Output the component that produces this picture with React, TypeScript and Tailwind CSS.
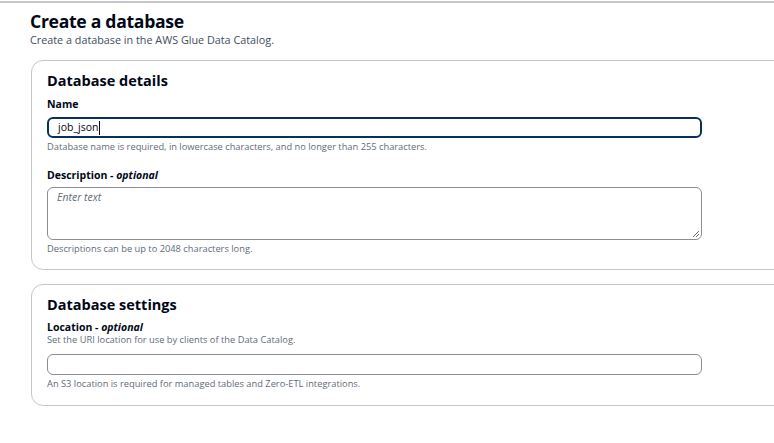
import React from "react";

const font = { fontFamily: '"Open Sans", "Noto Sans", Arial, sans-serif' };

export default function App() {
  return (
    <div className="w-[774px] h-[443px] overflow-hidden bg-white text-[#000716]" style={font}>
      <div className="mt-px h-[2px] w-full bg-[#c6c6cd]" />
      <div className="pl-[30px]">
        <h1 className="mt-[6px] text-[17.6px] leading-[24px] font-bold tracking-[-0.3px]">Create a database</h1>
        <p className="text-[10.8px] leading-[14px] text-[#414d5c]">Create a database in the AWS Glue Data Catalog.</p>

        <div className="mt-[13px] ml-px w-[780px] rounded-[12px] border border-[#c6c6cd] pl-[15px] pt-[9px] pb-[14px]">
          <h2 className="text-[14.5px] leading-[22px] font-bold">Database details</h2>
          <div className="mt-[5px] text-[10.5px] leading-[14px] font-bold">Name</div>
          <div className="mt-[6px] flex h-[21px] w-[655px] items-center rounded-[6px] border-2 border-[#0a2f5f] pl-[9px] text-[10.5px]">
            <span>job_json</span>
            <span className="ml-px inline-block h-[14px] w-px bg-[#000716]" />
          </div>
          <p className="mt-[3px] text-[9.3px] leading-[12px] text-[#5f6b7a]">Database name is required, in lowercase characters, and no longer than 255 characters.</p>
          <div className="mt-[15px] text-[10.5px] leading-[14px] font-bold">
            Description - <i>optional</i>
          </div>
          <div className="relative mt-[5px] h-[53px] w-[655px] rounded-[6px] border border-[#8c8c94] px-[9px] pt-[2px] text-[10.5px] italic text-[#5f6b7a]">
            Enter text
            <svg className="absolute right-[1px] bottom-[1px]" width="9" height="9" viewBox="0 0 9 9">
              <path d="M8 2 L2 8 M8 5 L5 8" stroke="#6b6b6b" strokeWidth="1" />
            </svg>
          </div>
          <p className="mt-[3px] text-[9.3px] leading-[12px] text-[#5f6b7a]">Descriptions can be up to 2048 characters long.</p>
        </div>

        <div className="mt-[14px] ml-px w-[780px] rounded-[12px] border border-[#c6c6cd] pl-[15px] pt-[9px] pb-[15px]">
          <h2 className="text-[14.5px] leading-[22px] font-bold">Database settings</h2>
          <div className="mt-[4px] text-[10.5px] leading-[14px] font-bold">
            Location - <i>optional</i>
          </div>
          <p className="text-[9.3px] leading-[12px] text-[#5f6b7a]">Set the URI location for use by clients of the Data Catalog.</p>
          <div className="mt-[8px] h-[21px] w-[655px] rounded-[6px] border border-[#8c8c94]" />
          <p className="mt-[3px] text-[9.3px] leading-[12px] text-[#5f6b7a]">An S3 location is required for managed tables and Zero-ETL integrations.</p>
        </div>
      </div>
    </div>
  );
}
